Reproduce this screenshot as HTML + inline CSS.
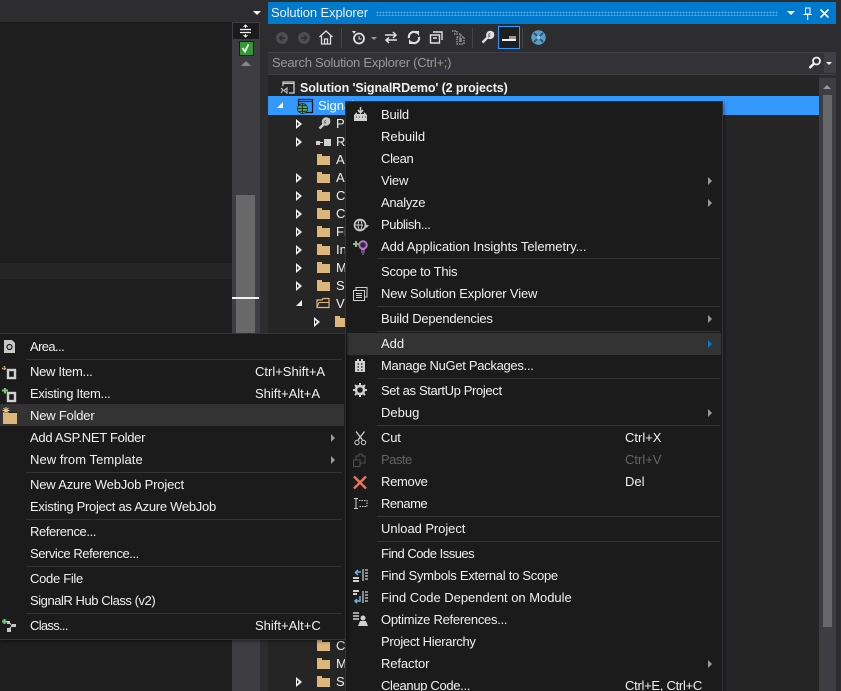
<!DOCTYPE html>
<html><head><meta charset="utf-8"><style>
html,body{margin:0;padding:0;background:#1e1e1e;}
#p{position:relative;width:841px;height:691px;overflow:hidden;background:#2d2d30;font-family:"Liberation Sans","Noto Sans CJK TC",sans-serif;font-size:13px;color:#f1f1f1;}
.b{position:absolute;}
.t{position:absolute;line-height:22px;height:22px;white-space:nowrap;}
.m{left:381px;}.s{left:30px;}.mk{left:625px;}.sk{left:255px;}
.sep{position:absolute;height:1px;background:#333337;}
.ms{left:377px;width:343px;}.ss{left:26px;width:316px;}
.ar{position:absolute;width:0;height:0;border-left:4px solid #999;border-top:4px solid transparent;border-bottom:4px solid transparent;}
.f{position:absolute;width:13px;height:9px;background:#dcb67a;}
.f:before{content:"";position:absolute;left:0;top:-2px;width:5px;height:2px;background:#dcb67a;}
.e{position:absolute;width:0;height:0;border-left:6px solid #f1f1f1;border-top:5px solid transparent;border-bottom:5px solid transparent;}
.e:after{content:"";position:absolute;left:-5px;top:-2.500px;width:0;height:0;border-left:2.500px solid #252526;border-top:2.500px solid transparent;border-bottom:2.500px solid transparent;}
.tt{position:absolute;line-height:18px;color:#f1f1f1;left:336px;}
svg{position:absolute;overflow:visible;}
</style></head><body><div id="p">

<!-- left document area -->
<div class="b" style="left:0;top:22px;width:232px;height:669px;background:#1e1e1e"></div>
<div class="b" style="left:0;top:263px;width:232px;height:16px;background:#252526"></div>
<div class="b" style="left:0;top:0;width:268px;height:22px;background:#2d2d30"></div>
<div class="b" style="left:253px;top:11px;width:0;height:0;border-left:4px solid transparent;border-right:4px solid transparent;border-top:4px solid #f1f1f1"></div>
<!-- doc scrollbar -->
<div class="b" style="left:232px;top:22px;width:28px;height:669px;background:#3e3e42"></div>
<div class="b" style="left:260px;top:22px;width:8px;height:669px;background:#2d2d30"></div>
<div class="b" style="left:233px;top:23px;width:26px;height:16px;background:#1b1b1c"></div>
<svg style="left:240px;top:24px" width="12" height="14"><path d="M0 5.500H11M0 8.500H11" stroke="#f1f1f1" stroke-width="1.200"/><path d="M5.500 1V4M5.500 10V13M3.500 3L5.500 1L7.500 3M3.500 11L5.500 13L7.500 11" stroke="#f1f1f1" fill="none"/></svg>
<div class="b" style="left:239px;top:41px;width:13px;height:13px;background:#339933;border:1px solid #1b1b1c"></div>
<svg style="left:241px;top:43px" width="10" height="10"><path d="M1.500 5L4 8.500L7.500 1.500" stroke="#fff" stroke-width="1.800" fill="none"/></svg>
<div class="b" style="left:241px;top:61px;width:0;height:0;border-left:5px solid transparent;border-right:5px solid transparent;border-bottom:5px solid #868686"></div>
<div class="b" style="left:236px;top:195px;width:19px;height:138px;background:#686868"></div>
<div class="b" style="left:232px;top:297px;width:27px;height:2px;background:#f1f1f1"></div>

<!-- solution explorer -->
<div class="b" style="left:268px;top:2px;width:568px;height:22px;background:#007acc"></div>
<div class="t" style="left:271px;top:2px;color:#f1f1f1;letter-spacing:-.12px">Solution Explorer</div>
<div class="b" style="left:376px;top:11px;width:402px;height:5px;background-image:radial-gradient(circle,#59a8de 0.8px,transparent 1px);background-size:3px 3px"></div>
<div class="b" style="left:787px;top:11px;width:0;height:0;border-left:4px solid transparent;border-right:4px solid transparent;border-top:4px solid #fff"></div>
<svg style="left:803px;top:7px" width="10" height="13"><path d="M2.500 1H7V7H2.500ZM0.500 7.500H9M4.700 8V13" stroke="#fff" fill="none"/></svg>
<svg style="left:820px;top:9px" width="9" height="9"><path d="M0.500 0.500L8.500 8.500M8.500 0.500L0.500 8.500" stroke="#fff" stroke-width="1.600"/></svg>

<!-- toolbar -->
<div class="b" style="left:268px;top:24px;width:568px;height:28px;background:#2d2d30"></div>
<div class="b" style="left:276px;top:32px;width:12px;height:12px;border-radius:50%;background:#4d4d50"></div>
<svg style="left:278px;top:34px" width="8" height="8"><path d="M7 4H1.500M4 1.500L1.500 4L4 6.500" stroke="#2d2d30" stroke-width="1.400" fill="none"/></svg>
<div class="b" style="left:298px;top:32px;width:12px;height:12px;border-radius:50%;background:#4d4d50"></div>
<svg style="left:300px;top:34px" width="8" height="8"><path d="M1 4H6.500M4 1.500L6.500 4L4 6.500" stroke="#2d2d30" stroke-width="1.400" fill="none"/></svg>
<svg style="left:319px;top:30px" width="14" height="15"><path d="M0.500 7L7 1L13.500 7M2.500 6V14H11.500V6M5.500 14V9H8.500V14" stroke="#e0e0e0" stroke-width="1.300" fill="none"/></svg>
<div class="b" style="left:341px;top:28px;width:1px;height:20px;background:#46464a"></div>
<svg style="left:351px;top:30px" width="15" height="15"><circle cx="8" cy="8.500" r="5" stroke="#e0e0e0" stroke-width="1.800" fill="none"/><path d="M8 6V9H10.500" stroke="#e0e0e0" fill="none"/><path d="M1 1H5L3 4Z" fill="#e0e0e0"/></svg>
<div class="b" style="left:371px;top:37px;width:0;height:0;border-left:3px solid transparent;border-right:3px solid transparent;border-top:3px solid #999"></div>
<svg style="left:384px;top:31px" width="14" height="13"><path d="M1 4H12M9 1L12 4L9 7" stroke="#e0e0e0" stroke-width="1.500" fill="none"/><path d="M13 9H2M5 6.500L2 9L5 12" stroke="#e0e0e0" stroke-width="1.500" fill="none"/></svg>
<svg style="left:407px;top:30px" width="14" height="15"><path d="M2 8A5 5 0 0 1 10 3M12 7A5 5 0 0 1 4 12" stroke="#e0e0e0" stroke-width="2.200" fill="none"/><path d="M8 1L12 1L12 6ZM6 14L2 14L2 9Z" fill="#e0e0e0"/></svg>
<svg style="left:429px;top:31px" width="14" height="13"><path d="M4 1H13V9M1.500 4H10.500V12H1.500Z" stroke="#e0e0e0" stroke-width="1.400" fill="none"/><path d="M4 7H8" stroke="#e0e0e0" stroke-width="1.500"/></svg>
<svg style="left:451px;top:30px" width="14" height="15"><path d="M1 1H6V4M3 4H10V7M6 7H13V14H6Z" stroke="#d0d0d0" stroke-dasharray="1.500 1" fill="none"/><path d="M8 9H11M8 11H11" stroke="#d0d0d0"/></svg>
<div class="b" style="left:472px;top:28px;width:1px;height:20px;background:#46464a"></div>
<svg style="left:481px;top:31px" width="13" height="13"><path d="M1.500 11.500L7 6M7 6A3 3 0 0 1 11.500 2L9.500 4L10.500 5L12 3.500A3 3 0 0 1 7.500 6.500" stroke="#e0e0e0" stroke-width="2.400" fill="none"/></svg>
<div class="b" style="left:498px;top:26px;width:20px;height:21px;border:1px solid #3399ff;background:#1f1f20"></div>
<div class="b" style="left:502px;top:39px;width:14px;height:1px;background:#f1f1f1;box-shadow:0 1px #f1f1f1"></div>
<div class="b" style="left:509px;top:36px;width:7px;height:3px;background:#999"></div>
<div class="b" style="left:522px;top:28px;width:1px;height:20px;background:#46464a"></div>
<svg style="left:531px;top:30px" width="15" height="15"><circle cx="7.500" cy="7.500" r="7.200" fill="#5a9fc8"/><path d="M3 3L12 12M12 3L3 12" stroke="#2a5a78" stroke-width="2"/><circle cx="7.500" cy="7.500" r="2" fill="#7fc4e8"/></svg>

<!-- search -->
<div class="b" style="left:268px;top:52px;width:568px;height:21px;background:#333337;border-top:1px solid #3f3f46;border-bottom:1px solid #3f3f46"></div>
<div class="t" style="left:272px;top:52px;color:#999;letter-spacing:-.25px">Search Solution Explorer (Ctrl+;)</div>
<div class="b" style="left:824px;top:53px;width:12px;height:20px;background:#3f3f46"></div>
<svg style="left:808px;top:56px" width="14" height="14"><circle cx="8.500" cy="5" r="3.500" stroke="#f1f1f1" stroke-width="1.800" fill="none"/><path d="M6 7.500L1.500 12" stroke="#f1f1f1" stroke-width="2.500"/></svg>
<div class="b" style="left:826px;top:62px;width:0;height:0;border-left:3px solid transparent;border-right:3px solid transparent;border-top:3px solid #f1f1f1"></div>
<div class="b" style="left:836px;top:0;width:5px;height:691px;background:#2d2d30"></div>
<div class="b" style="left:268px;top:0;width:568px;height:2px;background:#2d2d30"></div>

<!-- tree -->
<div class="b" style="left:268px;top:75px;width:551px;height:616px;background:#252526"></div>
<div class="b" style="left:819px;top:78px;width:17px;height:613px;background:#3e3e42"></div>
<div class="b" style="left:823px;top:95px;width:9px;height:532px;background:#686868"></div>
<div class="b" style="left:823px;top:85px;width:0;height:0;border-left:4.500px solid transparent;border-right:4.500px solid transparent;border-bottom:4.500px solid #999"></div>
<div class="b" style="left:268px;top:96px;width:551px;height:19px;background:#3399ff"></div>

<svg style="left:280px;top:81px" width="15" height="14"><path d="M3 5V1H14V12H9" stroke="#d0d0d0" stroke-width="1.300" fill="none"/><path d="M3 2.500H14" stroke="#d0d0d0"/><path d="M1 7L3 9L1 12M7 7V12L4 9.500Z" stroke="#d0d0d0" fill="none"/></svg>
<div class="t" style="left:300px;top:77px;font-weight:bold;font-size:12.500px;letter-spacing:-.11px">Solution 'SignalRDemo' (2 projects)</div>
<div class="b" style="left:277px;top:102px;width:0;height:0;border-bottom:6px solid #fff;border-left:6px solid transparent"></div>
<svg style="left:297px;top:99px" width="17" height="15"><path d="M1.500 8V0.500H15.500V13.500H9" stroke="#1e1e1e" stroke-width="1.300" fill="none"/><path d="M2 2.500H15" stroke="#1e1e1e"/><circle cx="5.500" cy="9.500" r="5" fill="#52a35a" stroke="#1e1e1e" stroke-width="0.700"/><path d="M0.500 9.500H10.500M5.500 4.500V14.500M2 6.500H9M2 12.500H9" stroke="#1e1e1e" stroke-width="0.800"/></svg>
<div class="t" style="left:318px;top:95px;color:#fff">Signal</div>

<div class="e" style="left:296px;top:119px"></div>
<svg style="left:318px;top:118px" width="12" height="12"><path d="M1.500 10.500L6 6M6 6A3 3 0 0 1 10.500 1.500L8.500 3.500L9 4L10.800 2.300A3 3 0 0 1 6.500 6" stroke="#c8c8c8" stroke-width="2.600" fill="none"/></svg>
<div class="tt" style="top:115px">P</div>
<div class="e" style="left:296px;top:137px"></div>
<div class="b" style="left:316px;top:141px;width:4px;height:4px;background:#d0d0d0"></div>
<div class="b" style="left:320px;top:142px;width:3px;height:1px;background:#d0d0d0"></div>
<div class="b" style="left:324px;top:139px;width:7px;height:7px;background:#d0d0d0"></div>
<div class="tt" style="top:133px">R</div>
<div class="f" style="left:317px;top:156px"></div><div class="tt" style="top:151px">A</div>
<div class="e" style="left:296px;top:173px"></div><div class="f" style="left:317px;top:174px"></div><div class="tt" style="top:169px">A</div>
<div class="e" style="left:296px;top:191px"></div><div class="f" style="left:317px;top:192px"></div><div class="tt" style="top:187px">C</div>
<div class="e" style="left:296px;top:209px"></div><div class="f" style="left:317px;top:210px"></div><div class="tt" style="top:205px">C</div>
<div class="e" style="left:296px;top:227px"></div><div class="f" style="left:317px;top:228px"></div><div class="tt" style="top:223px">Fi</div>
<div class="e" style="left:296px;top:245px"></div><div class="f" style="left:317px;top:246px"></div><div class="tt" style="top:241px">In</div>
<div class="e" style="left:296px;top:263px"></div><div class="f" style="left:317px;top:264px"></div><div class="tt" style="top:259px">M</div>
<div class="e" style="left:296px;top:281px"></div><div class="f" style="left:317px;top:282px"></div><div class="tt" style="top:277px">S</div>
<div class="b" style="left:296px;top:300px;width:0;height:0;border-bottom:6px solid #f1f1f1;border-left:6px solid transparent"></div>
<svg style="left:316px;top:297px" width="14" height="12"><path d="M1 10.500V3H6L7 1.500H13V10.500Z" stroke="#dcb67a" stroke-width="1.200" fill="none"/><path d="M1 10.500L3 5.500H13" stroke="#dcb67a" fill="none"/></svg>
<div class="tt" style="top:295px">V</div>
<div class="e" style="left:314px;top:317px"></div><div class="f" style="left:335px;top:318px"></div>
<div class="f" style="left:317px;top:642px"></div><div class="tt" style="top:637px">C</div>
<div class="f" style="left:317px;top:660px"></div><div class="tt" style="top:655px">M</div>
<div class="e" style="left:296px;top:677px"></div><div class="f" style="left:317px;top:678px"></div><div class="tt" style="top:673px">S</div>

<!-- main context menu -->
<div class="b" style="left:345px;top:101px;width:376px;height:600px;background:#1b1b1c;border:1px solid #333337;box-shadow:2px 2px 3px rgba(0,0,0,.3)"></div>
<div class="b" style="left:347px;top:333px;width:374px;height:22px;background:#333334"></div>

<div class="t m" style="top:104px;letter-spacing:-.2px">Build</div>
<div class="t m" style="top:126px">Rebuild</div>
<div class="t m" style="top:148px;letter-spacing:-.3px">Clean</div>
<div class="t m" style="top:170px;letter-spacing:-.2px">View</div><div class="ar" style="left:708px;top:177px"></div>
<div class="t m" style="top:192px;letter-spacing:-.3px">Analyze</div><div class="ar" style="left:708px;top:199px"></div>
<div class="t m" style="top:214px;letter-spacing:-.4px">Publish...</div>
<div class="t m" style="top:236px;letter-spacing:-.06px">Add Application Insights Telemetry...</div>
<div class="sep ms" style="top:258px"></div>
<div class="t m" style="top:261px;letter-spacing:-.23px">Scope to This</div>
<div class="t m" style="top:283px;letter-spacing:-.15px">New Solution Explorer View</div>
<div class="sep ms" style="top:306px"></div>
<div class="t m" style="top:308px;letter-spacing:-.22px">Build Dependencies</div><div class="ar" style="left:708px;top:315px"></div>
<div class="sep ms" style="top:331px"></div>
<div class="t m" style="top:333px">Add</div><div class="ar" style="left:708px;top:340px;border-left-color:#007acc"></div>
<div class="t m" style="top:355px;letter-spacing:-.3px">Manage NuGet Packages...</div>
<div class="sep ms" style="top:378px"></div>
<div class="t m" style="top:380px;letter-spacing:-.36px">Set as StartUp Project</div>
<div class="t m" style="top:402px">Debug</div><div class="ar" style="left:708px;top:409px"></div>
<div class="sep ms" style="top:425px"></div>
<div class="t m" style="top:427px;letter-spacing:-.2px">Cut</div><div class="t mk" style="top:427px">Ctrl+X</div>
<div class="t m" style="top:449px;color:#656565;letter-spacing:-.5px">Paste</div><div class="t mk" style="top:449px;color:#656565">Ctrl+V</div>
<div class="t m" style="top:471px;letter-spacing:-.3px">Remove</div><div class="t mk" style="top:471px">Del</div>
<div class="t m" style="top:493px;letter-spacing:-.5px">Rename</div>
<div class="sep ms" style="top:516px"></div>
<div class="t m" style="top:518px;letter-spacing:-.07px">Unload Project</div>
<div class="sep ms" style="top:541px"></div>
<div class="t m" style="top:543px;letter-spacing:-.5px">Find Code Issues</div>
<div class="t m" style="top:565px;letter-spacing:-.27px">Find Symbols External to Scope</div>
<div class="t m" style="top:587px;letter-spacing:-.03px">Find Code Dependent on Module</div>
<div class="t m" style="top:609px;letter-spacing:-.27px">Optimize References...</div>
<div class="t m" style="top:631px;letter-spacing:-.3px">Project Hierarchy</div>
<div class="t m" style="top:653px;letter-spacing:-.1px">Refactor</div><div class="ar" style="left:708px;top:660px"></div>
<div class="t m" style="top:675px;letter-spacing:-.33px">Cleanup Code...</div><div class="t mk" style="top:675px;letter-spacing:-.28px">Ctrl+E, Ctrl+C</div>

<!-- main menu icons -->
<svg style="left:353px;top:107px" width="15" height="15"><path d="M7.500 0V5M5 3L7.500 6L10 3" stroke="#d0d0d0" stroke-width="1.500" fill="none"/><path d="M1 8L4 5V7H11V5L14 8V14H1Z" fill="#d0d0d0"/><path d="M3 10H4M6 10H7M9 10H10M12 10H13" stroke="#1b1b1c"/></svg>
<svg style="left:353px;top:218px" width="16" height="14"><circle cx="7" cy="7" r="5.500" stroke="#c8c8c8" stroke-width="1.700" fill="none"/><path d="M1.500 7H10M7 1.500C4.500 4 4.500 10 7 12.500M7 1.500C9.500 4 9.500 10 7 12.500" stroke="#c8c8c8" fill="none"/><path d="M11 7H16L13.500 10Z" fill="#c8c8c8"/></svg>
<svg style="left:353px;top:240px" width="16" height="15"><path d="M3 1V7M0 4H6" stroke="#78c878" stroke-width="2"/><circle cx="10" cy="5" r="3.800" fill="#3a2a42" stroke="#b878d0" stroke-width="1.800"/><path d="M8 10H12M8 12H12M9 14H11" stroke="#b878d0"/></svg>
<svg style="left:353px;top:287px" width="15" height="14"><path d="M3 3V0.500H14V10H12" stroke="#d0d0d0" fill="none"/><path d="M0.500 3.500H11.500V13.500H0.500Z" stroke="#d0d0d0" fill="none"/><path d="M3 6.500H9M3 8.500H9M3 10.500H9" stroke="#d0d0d0"/></svg>
<svg style="left:354px;top:358px" width="12" height="15"><path d="M1 3H3V1H5V3H7V1H9V3H11V14H1Z" fill="#d0d0d0"/><path d="M3.500 6H5M7 6H8.500M3.500 9H5M7 9H8.500M3.500 12H5M7 12H8.500" stroke="#1b1b1c" stroke-width="1.200"/></svg>
<svg style="left:353px;top:383px" width="14" height="14"><circle cx="7" cy="7" r="4" stroke="#d0d0d0" stroke-width="2.500" fill="none"/><path d="M7 0V3M7 11V14M0 7H3M11 7H14M2 2L4 4M10 10L12 12M12 2L10 4M4 10L2 12" stroke="#d0d0d0" stroke-width="2"/></svg>
<svg style="left:354px;top:431px" width="13" height="15"><path d="M2 0.500L8.500 9M10.500 0.500L4 9" stroke="#d0d0d0" stroke-width="1.300"/><circle cx="3" cy="11.500" r="2.200" stroke="#d0d0d0" fill="none"/><circle cx="9.500" cy="11.500" r="2.200" stroke="#d0d0d0" fill="none"/></svg>
<svg style="left:353px;top:453px" width="13" height="14"><path d="M0.500 7H7V13.500H0.500ZM7 10H12V3H9V1H6V3H3V7" stroke="#505050" fill="none"/></svg>
<svg style="left:353px;top:476px" width="14" height="13"><path d="M1 0.500L13 12.500M13 0.500L1 12.500" stroke="#e8765c" stroke-width="2.400"/></svg>
<svg style="left:353px;top:498px" width="15" height="11"><path d="M1 0.500H5M1 10.500H5M3 0.500V10.500" stroke="#d0d0d0"/><path d="M6 2.500H14V8.500H6" stroke="#d0d0d0" stroke-dasharray="1.500 1" fill="none"/></svg>
<svg style="left:353px;top:568px" width="15" height="15"><path d="M10 1V13M12 2H15M12 5H15M12 8H15M12 11H15" stroke="#d0d0d0" stroke-width="1.200"/><path d="M8 4H3M5 2L2.500 4.500L5 7" stroke="#6cb4e8" stroke-width="1.500" fill="none"/><path d="M0 9H6V11H0ZM0 12H6V14H0Z" fill="#d0d0d0"/></svg>
<svg style="left:353px;top:590px" width="15" height="15"><path d="M0 0H6V2H0ZM0 3H4V5H0Z" fill="#d0d0d0"/><path d="M10 1V13M12 2H15M12 5H15M12 8H15M12 11H15" stroke="#d0d0d0" stroke-width="1.200"/><path d="M7 6V11H2M4 9L2 11L4 13" stroke="#6cb4e8" stroke-width="1.500" fill="none"/></svg>
<svg style="left:353px;top:612px" width="15" height="15"><path d="M0 1H6M0 4H6M0 7H6" stroke="#d0d0d0" stroke-width="1.500"/><circle cx="10" cy="6" r="2.500" fill="#d0d0d0"/><path d="M5 14L7 9H13L15 14Z" fill="#d0d0d0"/></svg>

<!-- submenu -->
<div class="b" style="left:-2px;top:333px;width:346px;height:305px;background:#1b1b1c;border:1px solid #333337;box-shadow:2px 2px 3px rgba(0,0,0,.35)"></div>
<div class="b" style="left:0;top:404px;width:344px;height:22px;background:#333334"></div>

<div class="t s" style="top:336px;letter-spacing:-.6px">Area...</div>
<div class="sep ss" style="top:359px"></div>
<div class="t s" style="top:361px;letter-spacing:-.3px">New Item...</div><div class="t sk" style="top:361px">Ctrl+Shift+A</div>
<div class="t s" style="top:383px;letter-spacing:-.3px">Existing Item...</div><div class="t sk" style="top:383px">Shift+Alt+A</div>
<div class="t s" style="top:405px;letter-spacing:-.2px">New Folder</div>
<div class="t s" style="top:427px;letter-spacing:-.28px">Add ASP.NET Folder</div><div class="ar" style="left:331px;top:434px"></div>
<div class="t s" style="top:449px;letter-spacing:.06px">New from Template</div><div class="ar" style="left:331px;top:456px"></div>
<div class="sep ss" style="top:472px"></div>
<div class="t s" style="top:474px;letter-spacing:-.17px">New Azure WebJob Project</div>
<div class="t s" style="top:496px;letter-spacing:-.28px">Existing Project as Azure WebJob</div>
<div class="sep ss" style="top:519px"></div>
<div class="t s" style="top:521px;letter-spacing:-.4px">Reference...</div>
<div class="t s" style="top:543px;letter-spacing:-.45px">Service Reference...</div>
<div class="sep ss" style="top:566px"></div>
<div class="t s" style="top:568px;letter-spacing:-.3px">Code File</div>
<div class="t s" style="top:590px;letter-spacing:-.45px">SignalR Hub Class (v2)</div>
<div class="sep ss" style="top:613px"></div>
<div class="t s" style="top:615px;letter-spacing:-.7px">Class...</div><div class="t sk" style="top:615px">Shift+Alt+C</div>

<!-- submenu icons -->
<svg style="left:4px;top:340px" width="11" height="13"><path d="M0 0H8L11 3V13H0Z" fill="#c8c8c8"/><circle cx="5.500" cy="7" r="2.500" stroke="#1b1b1c" stroke-width="1.200" fill="none"/></svg>
<svg style="left:2px;top:366px" width="15" height="14"><rect x="6" y="4" width="7" height="8" stroke="#d0d0d0" stroke-width="2.400" fill="none"/><path d="M0 2.500H5M2.500 0V5" stroke="#dcb67a" stroke-width="1.500" stroke-dasharray="1.500 1"/></svg>
<svg style="left:2px;top:388px" width="15" height="14"><rect x="6" y="5" width="7" height="8" stroke="#d0d0d0" stroke-width="2.400" fill="none"/><path d="M0 2.500H6M3 0V5.500" stroke="#78c878" stroke-width="2"/></svg>
<div class="b" style="left:3px;top:412px;width:14px;height:11px;background:#dcb67a;border-top:1px solid #1b1b1c"></div>
<svg style="left:2px;top:407px" width="8" height="8"><path d="M4 0V7M0.500 3.500H7.500M1.500 1L6.500 6M6.500 1L1.500 6" stroke="#f0c890"/></svg>
<svg style="left:2px;top:619px" width="15" height="14"><path d="M2.500 0V5M0 2.500H5" stroke="#78c878" stroke-width="2"/><path d="M7 3L10 7L6 11" stroke="#c8c8c8" fill="none"/><rect x="5" y="2" width="3" height="3" fill="#c8c8c8"/><rect x="10" y="5" width="4" height="3" fill="#c8c8c8"/><rect x="5" y="9" width="4" height="4" fill="#c8c8c8"/></svg>

</div></body></html>
